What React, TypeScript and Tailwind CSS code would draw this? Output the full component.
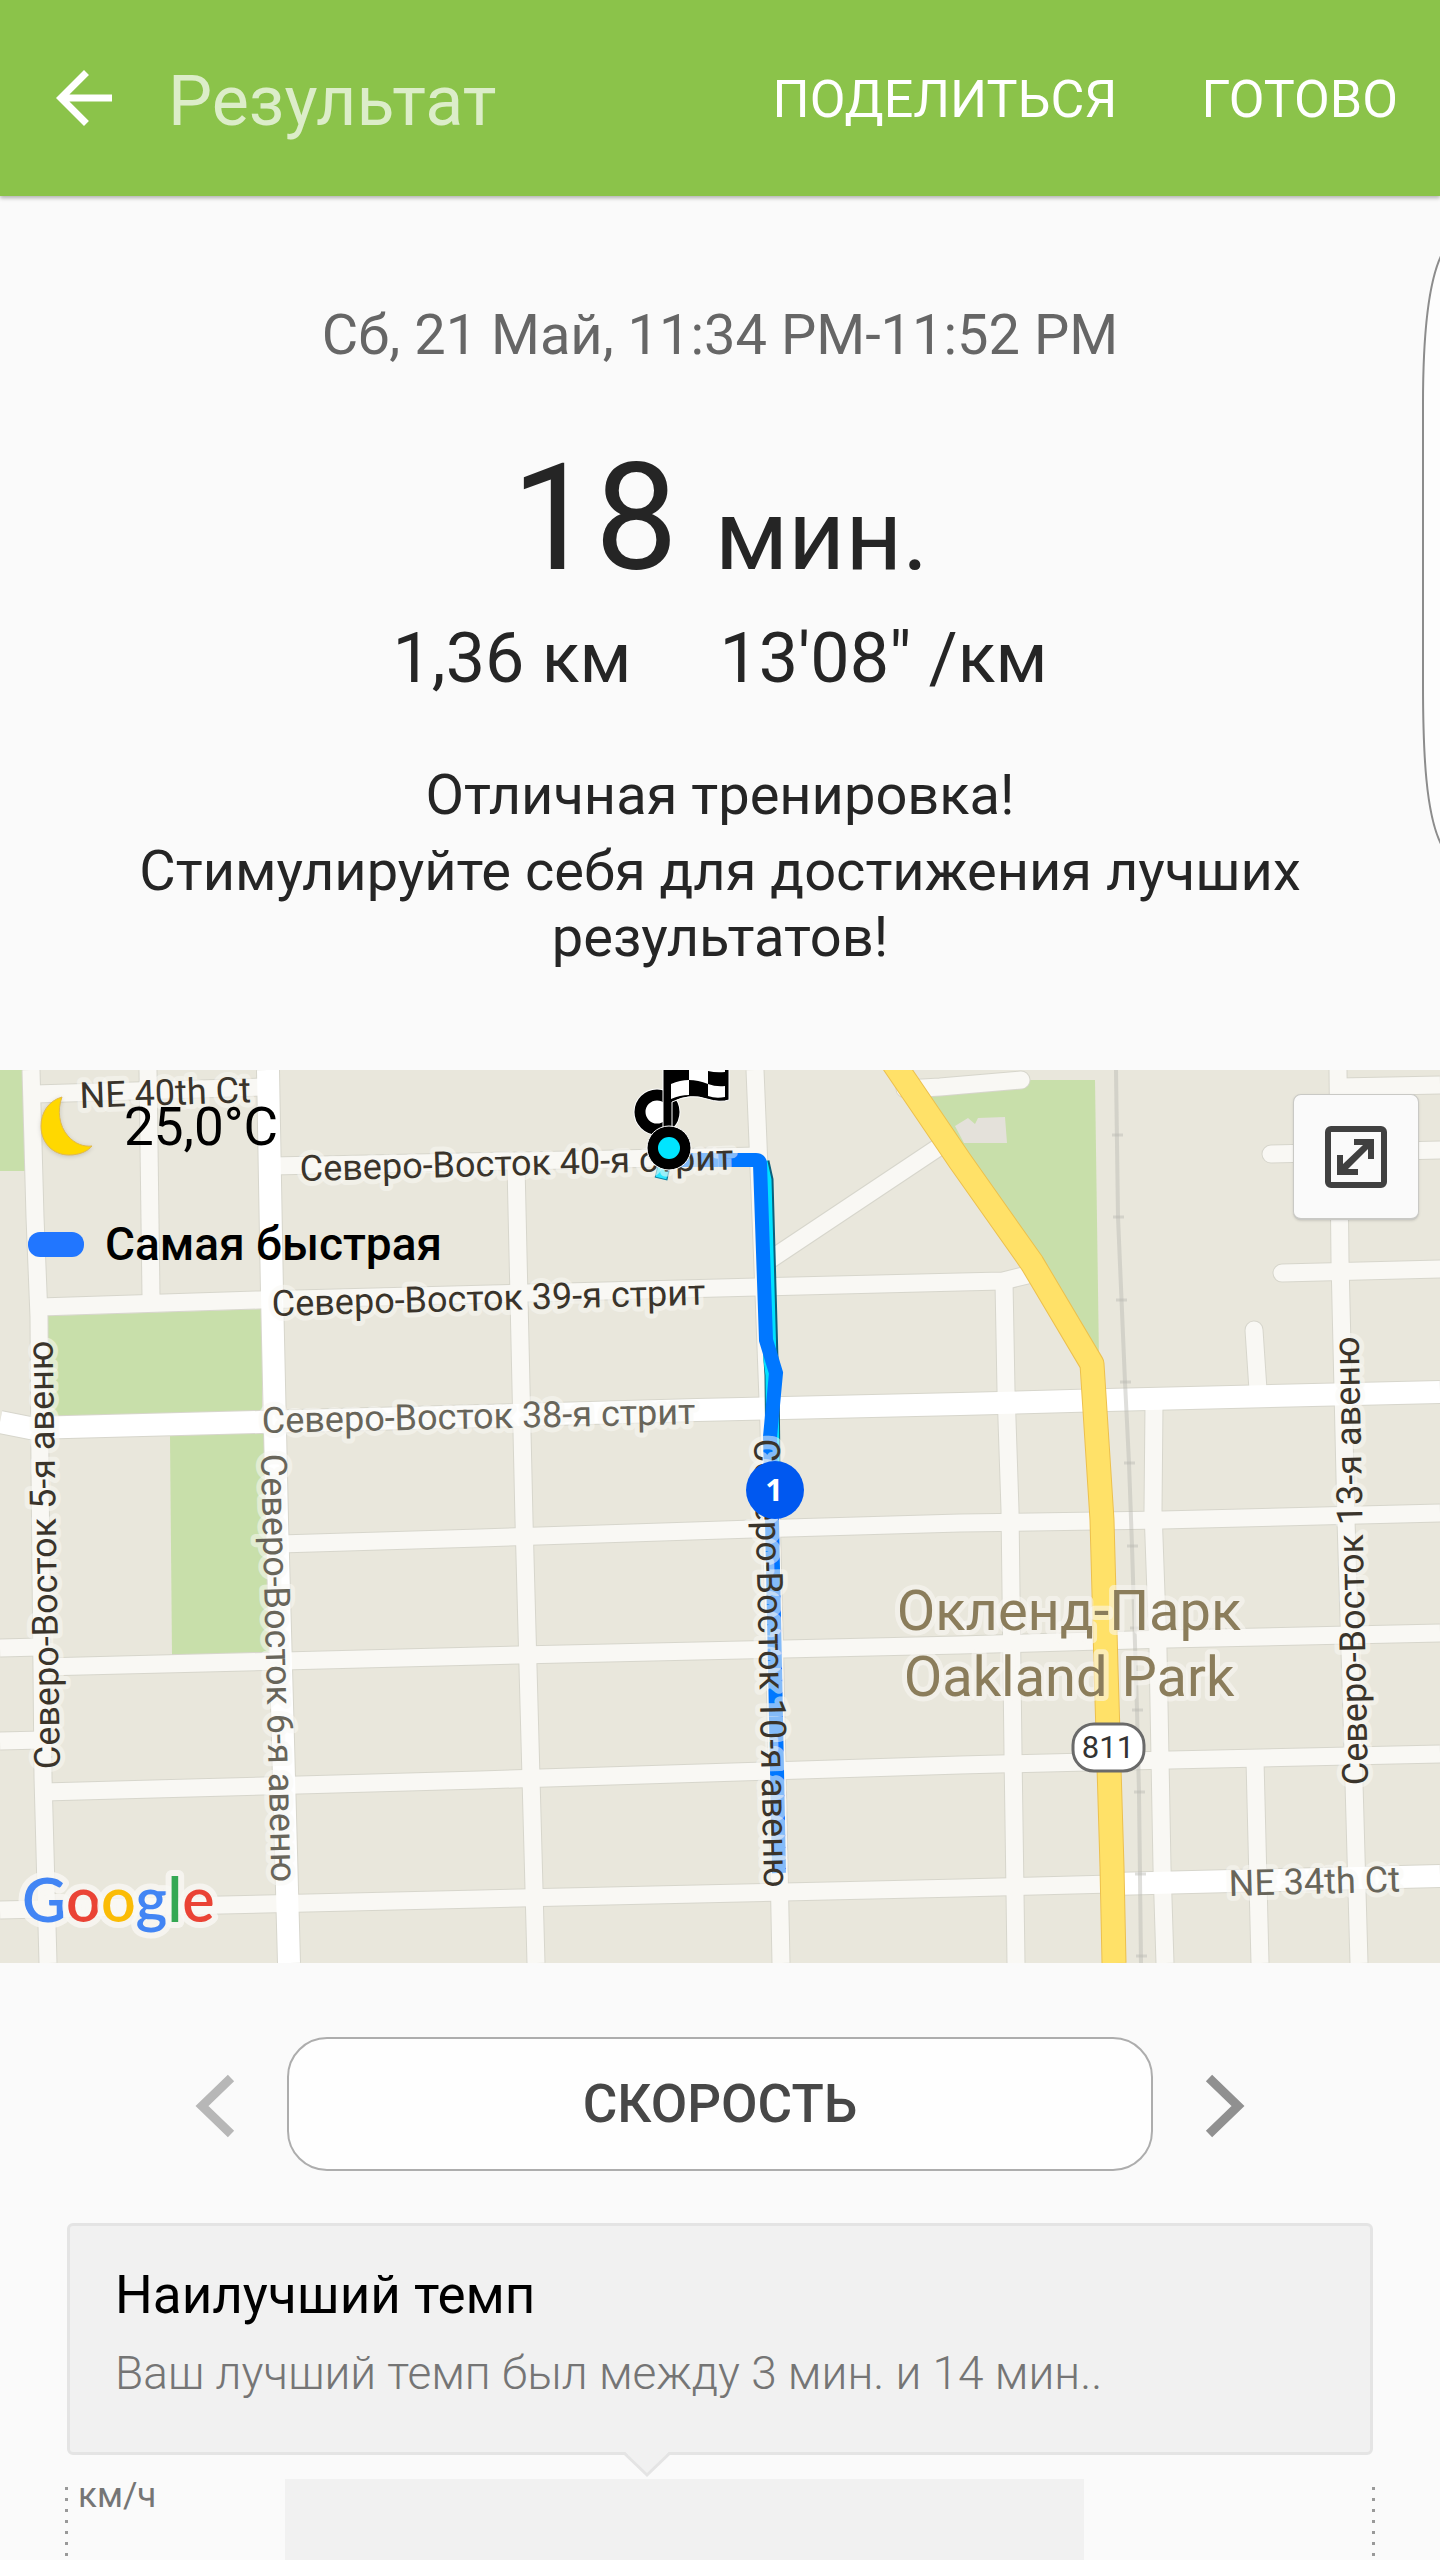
import { MdArrowBack } from "react-icons/md";

type Road = { d: string; cap?: "round" | "butt" };

// Side streets, all the same width
const streets: Road[] = [
  { d: "M31 0L35 147L39 247L40 400L42 600L43 707L48 893" },
  { d: "M148 0L151 226" },
  { d: "M516 95L524 450L528 597L536 893" },
  { d: "M755 0L758 73L764 223L769 357L775 600L781 893" },
  { d: "M1004 212L1006 320L1010 440L1013 683L1016 893" },
  { d: "M1154 335L1153 440L1158 580L1162 797L1165 893" },
  { d: "M1255 690L1260 893" },
  { d: "M1338 0L1340 190L1346 450L1354 713L1359 893" },
  { d: "M1254 260L1258 320", cap: "round" },
  { d: "M35 24L265 17" },
  { d: "M272 96L758 86" },
  { d: "M40 237L258 230L757 217L960 212L1003 211L1040 202" },
  { d: "M280 474L480 468L753 459L960 453L1162 450L1440 443" },
  { d: "M0 578L40 577" },
  { d: "M42 597L480 586L960 575L1167 569L1440 563" },
  { d: "M0 671L42 670" },
  { d: "M44 722L480 710L960 695L1170 690L1440 684" },
  { d: "M0 840L480 829L960 818L1112 814" },
  { d: "M768 191L945 73" },
  { d: "M905 19L940 17L1021 10", cap: "round" },
  { d: "M1340 17L1440 15" },
  { d: "M1271 84L1440 80", cap: "round" },
  { d: "M1282 203L1440 199", cap: "round" },
];

// Wider white avenues
const avenues: Road[] = [
  { d: "M268 0L272 223L277 450L281 597L289 893" },
  { d: "M0 352L30 358L260 352L697 340L960 334L1107 330L1440 322" },
  { d: "M1112 814L1440 806" },
];

const highway = "M890 -12L960 91L1032 193L1092 294L1102 450L1106 597L1112 797L1114 893";
const railway = "M1116 0L1118 147L1125 312L1129 393L1132 476L1137 640L1139 722L1141 893";
const railTicks = [
  [1117, 65],
  [1118, 147],
  [1121, 230],
  [1125, 312],
  [1129, 393],
  [1132, 476],
  [1135, 558],
  [1137, 640],
  [1139, 722],
  [1140, 804],
  [1141, 886],
];

const route = "M672 90H756Q760 90 760 94L766 270L776 303L770 367L772 450L775 597L779 803";

const labels = [
  { text: "NE 40th Ct", x: 80, y: 38, angle: -2, fill: "#3a342b" },
  { text: "Северо-Восток 40-я стрит", x: 300, y: 111, angle: -1.5, fill: "#3a342b" },
  { text: "Северо-Восток 39-я стрит", x: 272, y: 246, angle: -1.5, fill: "#3a342b" },
  { text: "Северо-Восток 38-я стрит", x: 262, y: 363, angle: -1.2, fill: "#68655a" },
  { text: "Северо-Восток 5-я авеню", x: 60, y: 699, angle: -91, fill: "#3a342b" },
  { text: "Северо-Восток 6-я авеню", x: 261, y: 384, angle: 88.6, fill: "#68655a" },
  { text: "Северо-Восток 10-я авеню", x: 754, y: 369, angle: 88.7, fill: "#3a342b" },
  { text: "Северо-Восток 13-я авеню", x: 1368, y: 715, angle: -91.2, fill: "#3a342b" },
  { text: "NE 34th Ct", x: 1229, y: 826, angle: -1.5, fill: "#68655a" },
];

function RouteMap() {
  return (
    <svg viewBox="0 0 1440 893" className="block h-auto w-full" role="img" aria-label="Карта маршрута">
      <rect width="1440" height="893" fill="#e9e7dc" />

      {/* Parks */}
      <g fill="#c8dfaa">
        <path d="M0 0H24L26 101H0Z" />
        <path d="M47 246L262 239V342L47 347Z" />
        <path d="M170 366L266 363L272 582L172 585Z" />
        <path d="M915 22L1028 10H1095L1099 290L1032 193Z" />
      </g>
      <path d="M955 56L968 48L975 54L978 48L1005 47L1007 73H964Z" fill="#e4e1da" />

      {/* Roads */}
      <g fill="none" strokeLinejoin="round">
        {[...streets, ...avenues].map((r, i) => (
          <path key={i} d={r.d} stroke="#d7d6cc" strokeWidth={i < streets.length ? 19 : 24} strokeLinecap={r.cap} />
        ))}
        {streets.map((r) => (
          <path key={r.d} d={r.d} stroke="#f9f8f4" strokeWidth="17" strokeLinecap={r.cap} />
        ))}
        {avenues.map((r) => (
          <path key={r.d} d={r.d} stroke="#fff" strokeWidth="22" />
        ))}
        <g stroke="#b9b7b2" strokeOpacity="0.45">
          <path d={railway} strokeWidth="4" />
          {railTicks.map(([x, y]) => (
            <path key={y} d={`M${x - 5} ${y}H${x + 6}`} strokeWidth="3" />
          ))}
        </g>
        <path d={highway} stroke="#ecc04e" strokeWidth="25" />
        <path d={highway} stroke="#ffe168" strokeWidth="23" />
      </g>

      {/* Track */}
      <g fill="none">
        <path d="M762 92L766 110L771 290L772 305L773 402" stroke="#0b5f7c" strokeWidth="15" />
        <path d="M761 92L765 110L770 290L772 305L773 402" stroke="#00e1ff" strokeWidth="13" />
        <path d={route} stroke="#0077ff" strokeWidth="14" />
        <path d="M664 96L661 109" stroke="#0b7fa0" strokeWidth="13" />
        <path d="M664 96L661 108" stroke="#2be6ff" strokeWidth="11" />
      </g>

      {/* Street names */}
      <g fontFamily="Roboto, sans-serif" paintOrder="stroke" stroke="#f9f8f4" strokeOpacity="0.55" strokeLinejoin="round">
        {labels.map((l) => (
          <text
            key={l.text}
            x={l.x}
            y={l.y}
            fill={l.fill}
            fontSize="36"
            strokeWidth="10"
            transform={`rotate(${l.angle} ${l.x} ${l.y})`}
          >
            {l.text}
          </text>
        ))}
        <g fill="#8b7d5b" fontSize="56" strokeWidth="10" textAnchor="middle">
          <text x="1069" y="560">Окленд-Парк</text>
          <text x="1069" y="626">Oakland Park</text>
        </g>
      </g>

      {/* Road shield */}
      <rect x="1073" y="654" width="71" height="47" rx="21" fill="#fff" stroke="#6a6a6a" strokeWidth="3" />
      <text x="1108" y="688" fill="#333" fontSize="31" fontFamily="Roboto, sans-serif" textAnchor="middle">
        811
      </text>

      {/* Kilometre marker */}
      <circle cx="775" cy="420" r="29" fill="#0058f0" />
      <text x="774" y="431" fill="#fff" fontSize="31" fontWeight="700" fontFamily="Open Sans, sans-serif" textAnchor="middle">
        1
      </text>

      {/* Start and finish markers */}
      <circle cx="657" cy="42" r="17" fill="#fff" stroke="#fff" strokeWidth="13" />
      <circle cx="657" cy="42" r="17" fill="#fff" stroke="#000" strokeWidth="11" />
      <path d="M663 -2H729V30Q720 33 707 29Q690 23 672 32V60H663Z" fill="#000" stroke="#fff" />
      <path
        d="M671 14Q680 10 689 10V25Q680 25 671 29ZM689 -2H708V14Q698 10 689 10ZM708 14Q716 17 725 16V27Q716 29 708 26ZM708 -2H725V2Q716 3 708 1Z"
        fill="#fff"
      />
      <circle cx="669" cy="78" r="22" fill="#000" stroke="#fff" />
      <circle cx="669" cy="78" r="11" fill="#00e5ff" />

      {/* Map provider */}
      <text
        x="22"
        y="852"
        fontSize="61"
        fontFamily="Lato, sans-serif"
        fontWeight="600"
        paintOrder="stroke"
        stroke="#f9f8f4"
        strokeOpacity="0.8"
        strokeWidth="12"
        strokeLinejoin="round"
      >
        <tspan fill="#4285f4">G</tspan>
        <tspan fill="#ea4335">o</tspan>
        <tspan fill="#fbbc05">o</tspan>
        <tspan fill="#4285f4">g</tspan>
        <tspan fill="#34a853">l</tspan>
        <tspan fill="#ea4335">e</tspan>
      </text>
    </svg>
  );
}

function MoonIcon() {
  return (
    <svg viewBox="0 0 54 62" className="h-[62px] w-[54px] drop-shadow-sm" aria-hidden="true">
      <path
        d="M22 1C8 5 1 17 1 30C1 47 13 59 29 59C40 59 48 55 52 50C44 51 35 48 28 40C19 30 17 14 22 1Z"
        fill="#ffd800"
        stroke="#e0b84c"
      />
    </svg>
  );
}

function ExpandIcon() {
  return (
    <svg viewBox="0 0 62 62" className="size-[62px]" fill="#404040" aria-hidden="true">
      <rect x="3" y="3" width="56" height="56" rx="3" fill="none" stroke="#404040" strokeWidth="6" />
      <path d="M29 13H49V33H43V23L23 43H33V49H12V29H18V38L38 19H29Z" />
    </svg>
  );
}

function Chevron({ flip = false }: { flip?: boolean }) {
  return (
    <svg viewBox="0 0 40 64" className="h-16 w-10" fill="none" stroke="currentColor" strokeWidth="9" aria-hidden="true">
      <path d={flip ? "M4 4L33 32L4 60" : "M36 4L7 32L36 60"} />
    </svg>
  );
}

export default function App() {
  return (
    <div className="relative flex min-h-screen flex-col overflow-hidden bg-[#fafafa] font-[Roboto,sans-serif] text-[#252525]">
      <header className="relative flex h-[196px] items-center bg-[#8bc34a] pr-[42px] pl-[42px] text-white shadow-[0_2px_4px_rgba(0,0,0,0.3)]">
        <button type="button" aria-label="Назад">
          <MdArrowBack className="size-[84px]" />
        </button>
        <h1 className="ml-[42px] pt-[6px] text-[70px] leading-[80px] text-white/70">Результат</h1>
        <nav className="ml-auto flex gap-[84px] pt-1 text-[52px] leading-[64px]">
          <button type="button">ПОДЕЛИТЬСЯ</button>
          <button type="button">ГОТОВО</button>
        </nav>
      </header>

      {/* Edge panel handle */}
      <svg viewBox="0 0 20 592" className="absolute top-[254px] right-0 h-[592px] w-5" aria-hidden="true">
        <path d="M21 2C8 30 3 80 3 150V430C3 500 6 560 21 590" fill="#fdfdfd" stroke="#8c8c8c" strokeWidth="2" />
      </svg>

      <section className="px-[100px] pt-[107px] pb-[100px] text-center">
        <p className="text-[56px] leading-[64px] text-[#666]">Сб, 21 Май, 11:34 PM-11:52 PM</p>
        <p className="mt-[72px] text-[148px] leading-[160px]">
          18 <span className="text-[99px] leading-none">мин.</span>
        </p>
        <div className="mt-[19px] flex justify-center gap-[88px] text-[70px] leading-[80px]">
          <span>1,36 км</span>
          <span>13'08" /км</span>
        </div>
        <p className="mt-16 text-[56px] leading-[66px]">Отличная тренировка!</p>
        <p className="mt-[10px] text-[56px] leading-[66px]">
          Стимулируйте себя для достижения лучших результатов!
        </p>
      </section>

      <section className="relative">
        <RouteMap />
        <div className="absolute top-[26px] left-[40px] flex items-center gap-[30px] text-black">
          <MoonIcon />
          <span className="text-[53px] leading-[60px]">25,0°C</span>
        </div>
        <div className="absolute top-[144px] left-[28px] flex items-center gap-[21px] text-black">
          <span className="h-[25px] w-14 rounded-xl bg-[#2176ff]" />
          <span className="text-[46px] leading-[60px] font-medium">Самая быстрая</span>
        </div>
        <button
          type="button"
          aria-label="Развернуть карту"
          className="absolute top-6 right-[21px] flex size-[126px] items-center justify-center rounded-lg border border-[#c9c9c5] border-b-2 bg-[#fafafa] shadow-sm"
        >
          <ExpandIcon />
        </button>
      </section>

      <div className="flex items-center justify-center gap-[52px] px-[100px] pt-[74px]">
        <button type="button" aria-label="Предыдущий график" className="pt-1 text-[#b7b7b7]">
          <Chevron />
        </button>
        <button
          type="button"
          className="h-[134px] max-w-[866px] flex-1 rounded-[40px] border-2 border-[#adadad] bg-[#fefefe] text-[53px] leading-[64px] font-medium text-[#474747]"
        >
          СКОРОСТЬ
        </button>
        <button type="button" aria-label="Следующий график" className="pt-1 text-[#909090]">
          <Chevron flip />
        </button>
      </div>

      <article className="relative mx-[67px] mt-[52px] rounded-md border-3 border-[#e4e4e4] bg-[#f1f1f1] px-[45px] pt-[37px] pb-[51px]">
        <h2 className="text-[53px] leading-[64px] text-black">Наилучший темп</h2>
        <p className="mt-[18px] text-[46px] leading-[56px] font-light text-[#757575]">
          Ваш лучший темп был между 3 мин. и 14 мин..
        </p>
        <svg viewBox="0 0 48 26" className="absolute top-full left-[553px] h-[26px] w-12" aria-hidden="true">
          <path d="M1 -1L24 22L47 -1Z" fill="#f1f1f1" />
          <path d="M1 1L24 23L47 1" fill="none" stroke="#e4e4e4" strokeWidth="3" />
        </svg>
      </article>

      <section className="mx-[65px] mt-6 flex min-h-20 flex-1">
        <div className="mt-2 w-[3px] bg-[repeating-linear-gradient(#999_0_3px,transparent_3px_11px)]" />
        <div className="flex-1 pl-[10px] text-[35px] leading-[34px] text-[#757575]">км/ч</div>
        <div className="w-[61%] bg-[#f1f1f1]" />
        <div className="w-[22%]" />
        <div className="mt-2 w-[3px] bg-[repeating-linear-gradient(#999_0_3px,transparent_3px_11px)]" />
      </section>
    </div>
  );
}
